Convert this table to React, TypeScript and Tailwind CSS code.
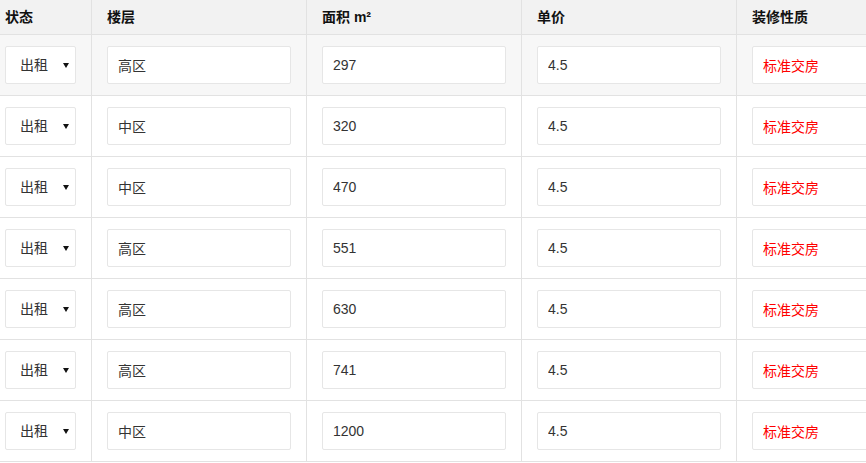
import React from "react"

type Row = {
  status: string
  floor: string
  area: string
  price: string
  decoration: string
}

const rows: Row[] = [
  { status: "出租", floor: "高区", area: "297", price: "4.5", decoration: "标准交房" },
  { status: "出租", floor: "中区", area: "320", price: "4.5", decoration: "标准交房" },
  { status: "出租", floor: "中区", area: "470", price: "4.5", decoration: "标准交房" },
  { status: "出租", floor: "高区", area: "551", price: "4.5", decoration: "标准交房" },
  { status: "出租", floor: "高区", area: "630", price: "4.5", decoration: "标准交房" },
  { status: "出租", floor: "高区", area: "741", price: "4.5", decoration: "标准交房" },
  { status: "出租", floor: "中区", area: "1200", price: "4.5", decoration: "标准交房" },
]

const fontStack = "font-['Liberation_Sans','Noto_Sans_CJK_SC',sans-serif]"

// shared input look
const inputCls =
  "h-[38px] w-full rounded-[2px] border border-[#e6e6e6] bg-white pl-[10px] text-[14px] text-[#333] outline-none"

const StatusSelect = ({ value }: { value: string }) => (
  <div className="flex h-[38px] w-[71px] items-center rounded-[2px] border border-[#e6e6e6] bg-white pl-[14px] text-[14px] text-[#333]">
    <span>{value}</span>
    <svg className="ml-[15px]" width="6" height="5" viewBox="0 0 6 5">
      <path d="M0 0h6L3 5z" fill="#111" />
    </svg>
  </div>
)

export default function App() {
  const headCell = "flex h-[35px] items-center border-b border-r border-[#e2e2e2] font-bold text-[14px] text-[#111]"
  const bodyCell = "flex h-[61px] items-center border-b border-r border-[#e2e2e2]"

  return (
    <div className={`w-full overflow-hidden bg-white ${fontStack}`}>
      <div className="grid w-[952px] grid-cols-[92px_215px_215px_215px_215px]">
        <div className={`${headCell} bg-[#f2f2f2] pl-[5px]`}>状态</div>
        <div className={`${headCell} bg-[#f2f2f2] pl-[15px]`}>楼层</div>
        <div className={`${headCell} bg-[#f2f2f2] pl-[15px]`}>面积 m²</div>
        <div className={`${headCell} bg-[#f2f2f2] pl-[15px]`}>单价</div>
        <div className={`${headCell} border-r-0 bg-[#f2f2f2] pl-[15px]`}>装修性质</div>

        {rows.map((r, i) => {
          const bg = i === 0 ? "bg-[#f7f7f7]" : "bg-white"
          return (
            <React.Fragment key={i}>
              <div className={`${bodyCell} ${bg} pl-[5px]`}>
                <StatusSelect value={r.status} />
              </div>
              <div className={`${bodyCell} ${bg} px-[15px]`}>
                <input readOnly value={r.floor} className={inputCls} />
              </div>
              <div className={`${bodyCell} ${bg} px-[15px]`}>
                <input readOnly value={r.area} className={inputCls} />
              </div>
              <div className={`${bodyCell} ${bg} px-[15px]`}>
                <input readOnly value={r.price} className={inputCls} />
              </div>
              <div className={`${bodyCell} border-r-0 ${bg} px-[15px]`}>
                <input readOnly value={r.decoration} className={`${inputCls} text-[#ff0000]`} />
              </div>
            </React.Fragment>
          )
        })}
      </div>
    </div>
  )
}
